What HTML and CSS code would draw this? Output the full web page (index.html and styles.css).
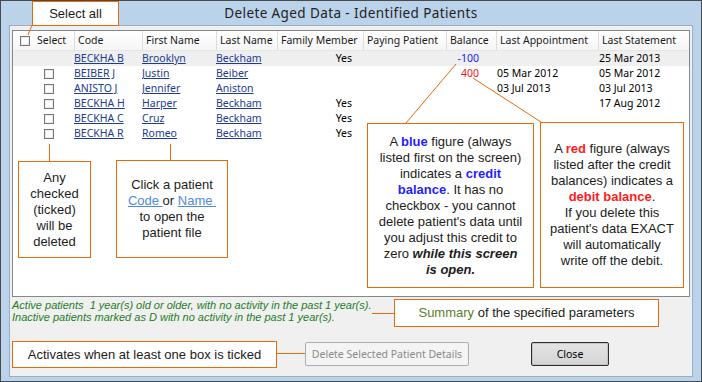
FILE: index.html
```html
<!DOCTYPE html>
<html>
<head>
<meta charset="utf-8">
<title>Delete Aged Data - Identified Patients</title>
<link rel="stylesheet" href="styles.css">
</head>
<body>
<div class="window">
  <div class="titlebar">Delete Aged Data - Identified Patients</div>
  <div class="client">
    <div class="grid">
      <div class="row head">
        <div class="cell sel"><span class="cb"></span>Select</div>
        <div class="cell">Code</div>
        <div class="cell">First Name</div>
        <div class="cell">Last Name</div>
        <div class="cell">Family Member</div>
        <div class="cell">Paying Patient</div>
        <div class="cell">Balance</div>
        <div class="cell">Last Appointment</div>
        <div class="cell">Last Statement</div>
      </div>
      <div class="row current">
        <div class="cell"></div>
        <div class="cell lnk-cell"><a class="lnk">BECKHA B</a></div>
        <div class="cell lnk-cell"><a class="lnk">Brooklyn</a></div>
        <div class="cell lnk-cell"><a class="lnk">Beckham</a></div>
        <div class="cell yes">Yes</div>
        <div class="cell"></div>
        <div class="cell bal credit">-100</div>
        <div class="cell"></div>
        <div class="cell">25 Mar 2013</div>
      </div>
      <div class="row">
        <div class="cell"><span class="cb row-cb"></span></div>
        <div class="cell lnk-cell"><a class="lnk">BEIBER J</a></div>
        <div class="cell lnk-cell"><a class="lnk">Justin</a></div>
        <div class="cell lnk-cell"><a class="lnk">Beiber</a></div>
        <div class="cell yes"></div>
        <div class="cell"></div>
        <div class="cell bal debit">400</div>
        <div class="cell">05 Mar 2012</div>
        <div class="cell">05 Mar 2012</div>
      </div>
      <div class="row">
        <div class="cell"><span class="cb row-cb"></span></div>
        <div class="cell lnk-cell"><a class="lnk">ANISTO J</a></div>
        <div class="cell lnk-cell"><a class="lnk">Jennifer</a></div>
        <div class="cell lnk-cell"><a class="lnk">Aniston</a></div>
        <div class="cell yes"></div>
        <div class="cell"></div>
        <div class="cell bal"></div>
        <div class="cell">03 Jul 2013</div>
        <div class="cell">03 Jul 2013</div>
      </div>
      <div class="row">
        <div class="cell"><span class="cb row-cb"></span></div>
        <div class="cell lnk-cell"><a class="lnk">BECKHA H</a></div>
        <div class="cell lnk-cell"><a class="lnk">Harper</a></div>
        <div class="cell lnk-cell"><a class="lnk">Beckham</a></div>
        <div class="cell yes">Yes</div>
        <div class="cell"></div>
        <div class="cell bal"></div>
        <div class="cell"></div>
        <div class="cell">17 Aug 2012</div>
      </div>
      <div class="row">
        <div class="cell"><span class="cb row-cb"></span></div>
        <div class="cell lnk-cell"><a class="lnk">BECKHA C</a></div>
        <div class="cell lnk-cell"><a class="lnk">Cruz</a></div>
        <div class="cell lnk-cell"><a class="lnk">Beckham</a></div>
        <div class="cell yes">Yes</div>
        <div class="cell"></div>
        <div class="cell bal"></div>
        <div class="cell"></div>
        <div class="cell"></div>
      </div>
      <div class="row">
        <div class="cell"><span class="cb row-cb"></span></div>
        <div class="cell lnk-cell"><a class="lnk">BECKHA R</a></div>
        <div class="cell lnk-cell"><a class="lnk">Romeo</a></div>
        <div class="cell lnk-cell"><a class="lnk">Beckham</a></div>
        <div class="cell yes">Yes</div>
        <div class="cell"></div>
        <div class="cell bal"></div>
        <div class="cell"></div>
        <div class="cell"></div>
      </div>
    </div>
    <div class="summary">Active patients  1 year(s) old or older, with no activity in the past 1 year(s).
Inactive patients marked as D with no activity in the past 1 year(s).</div>
    <div class="buttons">
      <button class="btn btn-disabled" disabled>Delete Selected Patient Details</button>
      <button class="btn btn-default">Close</button>
    </div>
  </div>

  <svg class="leaders" width="702" height="382" viewBox="0 0 702 382">
    <line x1="32" y1="25" x2="28" y2="35"/>
    <line x1="49.5" y1="144" x2="49.5" y2="161"/>
    <line x1="170.5" y1="144" x2="170.5" y2="160"/>
    <line x1="406" y1="123" x2="456" y2="64"/>
    <line x1="473" y1="78" x2="541" y2="122"/>
    <line x1="372" y1="313.5" x2="394" y2="313.5"/>
    <line x1="276" y1="353.5" x2="305" y2="353.5"/>
  </svg>

  <div class="note note-selectall">Select all</div>
  <div class="note note-checked"><div>Any<br>checked<br>(ticked)<br>will be<br>deleted</div></div>
  <div class="note note-click"><div>Click a patient<br><span class="note-link">Code </span>or <span class="note-link">Name&nbsp;</span><br>to open the<br>patient file</div></div>
  <div class="note note-blue"><div>A <b class="c-blue">blue</b> figure (always<br>listed first on the screen)<br>indicates a <b class="c-blue">credit</b><br><b class="c-blue">balance</b>. It has no<br>checkbox - you cannot<br>delete patient's data until<br>you adjust this credit to<br>zero <b><i>while this screen</i></b><br><b><i>is open.</i></b></div></div>
  <div class="note note-red"><div>A <b class="c-red">red</b> figure (always<br>listed after the credit<br>balances) indicates a<br><b class="c-red">debit balance</b>.<br>If you delete this<br>patient's data EXACT<br>will automatically<br>write off the debit.</div></div>
  <div class="note note-summary"><div><span class="c-green">Summary</span> of the specified parameters</div></div>
  <div class="note note-activates"><div>Activates when at least one box is ticked</div></div>
</div>
</body>
</html>
```

FILE: styles.css
```css
html, body {
  margin: 0;
  padding: 0;
}

body {
  width: 702px;
  height: 382px;
  overflow: hidden;
  background: #ffffff;
  font-family: "Noto Sans", "DejaVu Sans", sans-serif;
}

.window {
  position: relative;
  box-sizing: border-box;
  width: 702px;
  height: 382px;
  border: 1px solid #4a4a4a;
  background: #bbd2eb;
  padding: 0 8px 4px;
  display: flex;
  flex-direction: column;
}

.titlebar {
  height: 24px;
  line-height: 24px;
  text-align: center;
  font-size: 13.5px;
  color: #222222;
  letter-spacing: 0.4px;
}

.client {
  flex: 1;
  border: 1px solid #9aadc4;
  background: #f0f0f0;
  padding: 4px 2px 0;
  display: flex;
  flex-direction: column;
}

.grid {
  box-sizing: border-box;
  height: 267px;
  border: 1px solid #828790;
  background: #ffffff;
}

.row {
  display: grid;
  grid-template-columns: 61px 68px 74px 61px 86px 83px 50px 102px 91px;
  height: 15px;
  line-height: 15px;
  font-size: 10.5px;
  color: #000000;
}

.row.head {
  box-sizing: border-box;
  height: 20px;
  line-height: 19px;
  background: linear-gradient(#ffffff, #f5f5f5);
  border-bottom: 1px solid #e6e6e6;
  color: #1a1a1a;
}

.row.current {
  background: #efefef;
}

.cell {
  box-sizing: border-box;
  padding-left: 1px;
  white-space: nowrap;
  overflow: hidden;
}

.head .cell + .cell {
  border-left: 1px solid #dddddd;
  padding-left: 3px;
}

.head .sel {
  display: flex;
  align-items: center;
  padding-left: 7px;
}

.cb {
  display: inline-block;
  box-sizing: border-box;
  width: 10px;
  height: 10px;
  border: 1px solid #767676;
  background: #ffffff;
  box-shadow: inset 0 0 0 1px #ececec;
}

.head .cb {
  margin-right: 7px;
}

.row-cb {
  margin-left: 30px;
  margin-top: 3px;
  vertical-align: top;
}

.lnk-cell {
  padding-left: 0;
}

.lnk {
  color: #1c3c91;
  text-decoration: underline;
}

.yes {
  text-align: right;
  padding-right: 11px;
}

.bal {
  text-align: right;
  padding-right: 17px;
}

.credit {
  color: #1c1cf0;
}

.debit {
  color: #f01414;
}

.summary {
  margin-top: 2px;
  font: italic 11px/12px "Liberation Sans", Arial, sans-serif;
  color: #1c7d1f;
  white-space: pre;
}

.buttons {
  display: flex;
  margin-top: 19px;
  padding-left: 293px;
  gap: 62px;
}

.btn {
  box-sizing: border-box;
  height: 24px;
  margin: 0;
  padding: 0;
  font-family: "Noto Sans", "DejaVu Sans", sans-serif;
  font-size: 10.5px;
  border-radius: 2px;
}

.btn-disabled {
  width: 164px;
  border: 1px solid #adadad;
  background: #f4f4f4;
  color: #8a8a8a;
}

.btn-default {
  width: 78px;
  border: 1px solid #2e2e2e;
  background: linear-gradient(#e4e4e4, #d4d4d4);
  box-shadow: inset 0 0 0 1px #c4c4c4;
  color: #000000;
}

.leaders {
  position: absolute;
  left: -1px;
  top: -1px;
  pointer-events: none;
  z-index: 2;
}

.leaders line {
  stroke: #e46c0a;
  stroke-width: 1;
}

.note {
  position: absolute;
  box-sizing: border-box;
  z-index: 3;
  border: 1px solid #e46c0a;
  background: #ffffff;
  display: flex;
  align-items: center;
  justify-content: center;
  text-align: center;
  white-space: nowrap;
  font: 13px/16px "Liberation Sans", Arial, sans-serif;
  color: #1c1c1c;
}

.note-selectall {
  left: 31px;
  top: 0;
  width: 87px;
  height: 25px;
}

.note-checked {
  left: 17px;
  top: 160px;
  width: 73px;
  height: 97px;
}

.note-click {
  left: 115px;
  top: 159px;
  width: 112px;
  height: 98px;
}

.note-blue {
  left: 366px;
  top: 122px;
  width: 167px;
  height: 165px;
}

.note-red {
  left: 539px;
  top: 121px;
  width: 144px;
  height: 166px;
}

.note-summary {
  left: 393px;
  top: 298px;
  width: 265px;
  height: 28px;
}

.note-activates {
  left: 11px;
  top: 340px;
  width: 265px;
  height: 27px;
}

.note-link {
  color: #4f8ad8;
  text-decoration: underline;
}

.c-blue {
  color: #1f1fff;
}

.c-red {
  color: #ff1c1c;
}

.c-green {
  color: #5a7d2a;
}
```
